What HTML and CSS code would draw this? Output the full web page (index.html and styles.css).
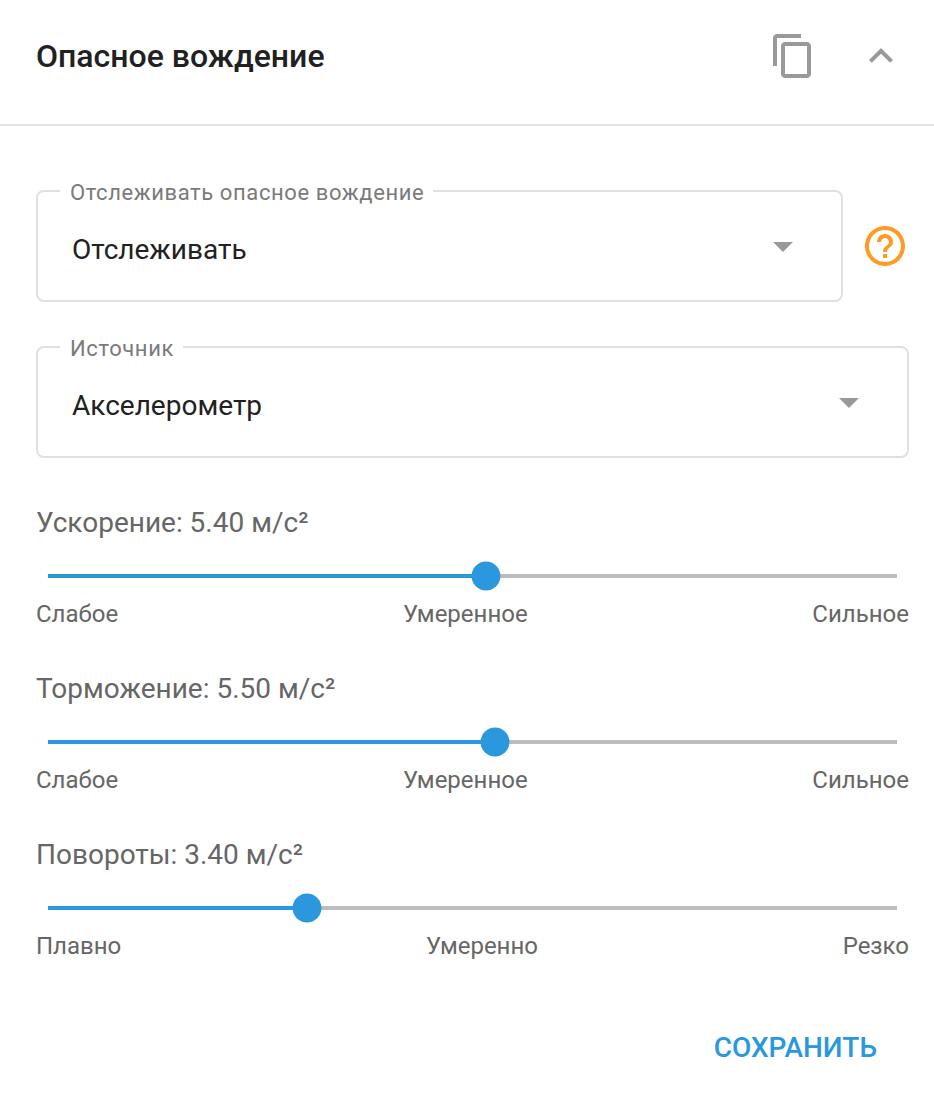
FILE: index.html
```html
<!DOCTYPE html>
<html lang="ru">
<head>
<meta charset="utf-8">
<title>Опасное вождение</title>
<link rel="stylesheet" href="styles.css">
</head>
<body>
<section class="card">
  <header class="header">
    <h1 class="title">Опасное вождение</h1>
    <svg class="icon copy" width="48" height="48" viewBox="0 0 24 24"><path d="M16 1H4c-1.100 0-2 .9-2 2v14h2V3h12V1zm3 4H8c-1.100 0-2 .9-2 2v14c0 1.100.9 2 2 2h11c1.100 0 2-.9 2-2V7c0-1.100-.9-2-2-2zm0 16H8V7h11v14z"/></svg>
    <svg class="icon chevron" width="48" height="48" viewBox="0 0 24 24"><path d="M12 8l-6 6 1.410 1.410L12 10.830l4.590 4.580L18 14z"/></svg>
  </header>
  <main class="content">
    <div class="row">
      <fieldset class="select">
        <legend class="legend">Отслеживать опасное вождение</legend>
        <span class="value">Отслеживать</span>
        <i class="arrow"></i>
      </fieldset>
      <svg class="help" width="48" height="48" viewBox="0 0 24 24"><path d="M11 18h2v-2h-2v2zm1-16C6.480 2 2 6.480 2 12s4.480 10 10 10 10-4.480 10-10S17.520 2 12 2zm0 18c-4.410 0-8-3.590-8-8s3.590-8 8-8 8 3.590 8 8-3.590 8-8 8zm0-14c-2.210 0-4 1.790-4 4h2c0-1.100.9-2 2-2s2 .9 2 2c0 2-3 1.750-3 5h2c0-2.250 3-2.500 3-5 0-2.210-1.790-4-4-4z"/></svg>
    </div>
    <div class="row">
      <fieldset class="select">
        <legend class="legend">Источник</legend>
        <span class="value">Акселерометр</span>
        <i class="arrow"></i>
      </fieldset>
    </div>
    <div class="sliders">
      <div class="slider">
        <div class="caption">Ускорение: 5.40 м/с²</div>
        <div class="track"><div class="fill" style="width:438px"></div><div class="thumb"></div><div class="rest"></div></div>
        <div class="scale"><span>Слабое</span><span>Умеренное</span><span>Сильное</span></div>
      </div>
      <div class="slider">
        <div class="caption">Торможение: 5.50 м/с²</div>
        <div class="track"><div class="fill" style="width:447px"></div><div class="thumb"></div><div class="rest"></div></div>
        <div class="scale"><span>Слабое</span><span>Умеренное</span><span>Сильное</span></div>
      </div>
      <div class="slider">
        <div class="caption">Повороты: 3.40 м/с²</div>
        <div class="track"><div class="fill" style="width:259px"></div><div class="thumb"></div><div class="rest"></div></div>
        <div class="scale"><span>Плавно</span><span>Умеренно</span><span>Резко</span></div>
      </div>
    </div>
    <div class="actions"><button class="save">СОХРАНИТЬ</button></div>
  </main>
</section>
</body>
</html>
```
FILE: styles.css
```css
* { box-sizing: border-box; }
body { margin: 0; background: #fff; font-family: Roboto, sans-serif; color: #212121; }
.card { width: 934px; height: 1108px; overflow: hidden; }
.header { display: flex; align-items: center; height: 126px; padding: 0 29px 12px 36px; border-bottom: 2px solid #e3e3e3; }
.title { flex: 1; margin: 0; font-size: 32px; line-height: 40px; font-weight: 500; }
.icon { fill: #999; }
.copy { margin-right: 40px; }
.content { padding: 52px 25px 0 36px; }
.row { display: flex; height: 124px; margin-bottom: 32px; }
.select { flex: 1; min-width: 0; display: flex; align-items: center; height: 124px; margin: 0; padding: 0 48px 4px 34px; border: 2px solid #e0e0e0; border-radius: 8px; }
.legend { height: 26px; margin-left: -12px; padding: 0 9px 0 10px; font-size: 22px; line-height: 30px; letter-spacing: 0.6px; color: #7a7a7a; }
.value { flex: 1; font-size: 28px; line-height: 36px; }
.arrow { margin-bottom: 6px; border: 10px solid transparent; border-top-color: #999; border-bottom: 0; }
.help { margin: 44px 0 0 18px; fill: #ff9a26; }
.sliders { padding-top: 15px; }
.slider { height: 166px; color: #666; }
.caption { font-size: 28px; line-height: 36px; }
.track { display: flex; align-items: center; height: 30px; margin: 20px 12px 0; }
.fill { height: 4px; background: #2b98de; }
.thumb { width: 28px; height: 28px; margin: 0 -14px; border-radius: 50%; background: #2b98de; transform: scale(1.03); z-index: 1; }
.rest { flex: 1; height: 4px; background: #bdbdbd; }
.scale { display: flex; justify-content: space-between; margin-top: 9px; font-size: 24px; line-height: 28px; }
.actions { display: flex; justify-content: flex-end; padding: 27px 32px 0 0; }
.save { border: 0; padding: 0; background: none; font: 500 28px/36px Roboto, sans-serif; color: #2b98de; }
```
